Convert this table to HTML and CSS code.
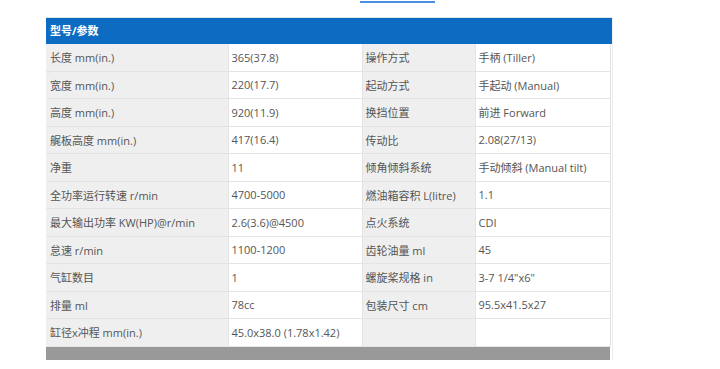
FILE: index.html
```html
<!DOCTYPE html>
<html lang="zh-CN">
<head>
<meta charset="utf-8">
<title>型号/参数</title>
<link rel="stylesheet" href="styles.css">
</head>
<body>
<div class="tab-line"></div>
<div class="spec">
  <div class="spec-head">型号/参数</div>
  <table class="spec-table">
    <colgroup>
      <col class="c1"><col class="c2"><col class="c3"><col class="c4">
    </colgroup>
    <tbody>
      <tr><td class="k">长度 mm(in.)</td><td>365(37.8)</td><td class="k">操作方式</td><td>手柄 (Tiller)</td></tr>
      <tr><td class="k">宽度 mm(in.)</td><td>220(17.7)</td><td class="k">起动方式</td><td>手起动 (Manual)</td></tr>
      <tr><td class="k">高度 mm(in.)</td><td>920(11.9)</td><td class="k">换挡位置</td><td>前进 Forward</td></tr>
      <tr><td class="k">艉板高度 mm(in.)</td><td>417(16.4)</td><td class="k">传动比</td><td>2.08(27/13)</td></tr>
      <tr><td class="k">净重</td><td>11</td><td class="k">倾角倾斜系统</td><td>手动倾斜 (Manual tilt)</td></tr>
      <tr><td class="k">全功率运行转速 r/min</td><td>4700-5000</td><td class="k">燃油箱容积 L(litre)</td><td>1.1</td></tr>
      <tr><td class="k">最大输出功率 KW(HP)@r/min</td><td>2.6(3.6)@4500</td><td class="k">点火系统</td><td>CDI</td></tr>
      <tr><td class="k">怠速 r/min</td><td>1100-1200</td><td class="k">齿轮油量 ml</td><td>45</td></tr>
      <tr><td class="k">气缸数目</td><td>1</td><td class="k">螺旋桨规格 in</td><td>3-7 1/4"x6"</td></tr>
      <tr><td class="k">排量 ml</td><td>78cc</td><td class="k">包装尺寸 cm</td><td>95.5x41.5x27</td></tr>
      <tr><td class="k">缸径x冲程 mm(in.)</td><td>45.0x38.0 (1.78x1.42)</td><td class="k"></td><td></td></tr>
    </tbody>
  </table>
  <div class="spec-foot"></div>
</div>
</body>
</html>
```

FILE: styles.css
```css
html, body {
  margin: 0;
  padding: 0;
  background: #ffffff;
}
body {
  font-family: "Open Sans", "Noto Sans CJK SC", sans-serif;
  font-size: 11px;
  color: #555555;
  padding-top: 1px;
}
.tab-line {
  margin-left: 360px;
  width: 75px;
  height: 2px;
  background: #4a90e2;
}
.spec {
  margin-left: 46px;
  margin-top: 14px;
  width: 566px;
  box-shadow: 1px 0 0 #eeeeee;
}
.spec-head {
  height: 26px;
  border-top: 1px solid #dfe6ee;
  background: #0e6bc2;
  color: #ffffff;
  font-weight: bold;
  line-height: 26px;
  padding-left: 4px;
}
.spec-table {
  width: 564px;
  border-collapse: collapse;
  table-layout: fixed;
}
.c1 { width: 182px; }
.c2 { width: 134px; }
.c3 { width: 113px; }
.c4 { width: 135px; }
.spec-table td {
  height: 26.5px;
  padding: 0 0 0 3px;
  border: 1px solid #e4e4e4;
  border-top: 0;
  background: #ffffff;
  white-space: nowrap;
  overflow: hidden;
  vertical-align: middle;
}
.spec-table td:first-child { border-left: 0; padding-left: 4px; }
.spec-table td.k { background: #efefef; }
.spec-foot {
  width: 564px;
  height: 13px;
  background: #999999;
}
```
